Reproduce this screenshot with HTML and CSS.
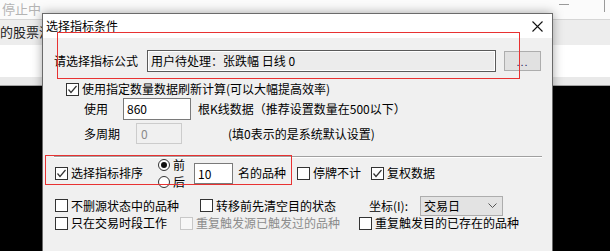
FILE: index.html
```html
<!doctype html>
<html lang="zh-CN">
  <head>
    <meta charset="utf-8">
    <title>选择指标条件</title>
    <link rel="stylesheet" href="styles.css">
  </head>
  <body>
    <div class="app">
      <div class="app-top">
        <span class="status">停止中</span>
        <span class="win-btns"><span class="min-line"></span><span class="max-box"></span></span>
      </div>
      <div class="app-tabs">的股票池</div>
      <div class="app-white"></div>
      <div class="app-gray"></div>
      <div class="app-black"></div>
    </div>

    <div class="dialog">
      <div class="titlebar">
        <span class="title">选择指标条件</span>
        <svg class="close" width="11" height="11" viewBox="0 0 11 11">
          <path d="M0.5 0.5 L10.5 10.5 M10.5 0.5 L0.5 10.5" stroke="#111" stroke-width="1.1" fill="none"/>
        </svg>
      </div>

      <div class="dlg-body">
        <div class="row formula-row">
          <span class="formula-label">请选择指标公式</span>
          <span class="formula-input">用户待处理：张跌幅 日线 0</span>
          <span class="more-btn">...</span>
        </div>

        <div class="row opt-row">
          <span class="cb"><svg width="11" height="11" viewBox="0 0 11 11"><polyline points="1.5,5.5 4,8.5 9.5,2" stroke="#333" stroke-width="1.2" fill="none"/></svg></span>
          <span>使用指定数量数据刷新计算(可以大幅提高效率)</span>
        </div>

        <div class="row num-row">
          <span class="num-label">使用</span>
          <span class="text-input">860</span>
          <span class="num-note">根K线数据（推荐设置数量在500以下）</span>
        </div>

        <div class="row period-row">
          <span class="period-label">多周期</span>
          <span class="text-input disabled">0</span>
          <span class="period-note">(填0表示的是系统默认设置)</span>
        </div>

        <div class="separator"></div>

        <div class="row sort-row">
          <span class="cb first"><svg width="11" height="11" viewBox="0 0 11 11"><polyline points="1.5,5.5 4,8.5 9.5,2" stroke="#333" stroke-width="1.2" fill="none"/></svg></span>
          <span class="cb-text">选择指标排序</span>
          <div class="radio-group">
            <label class="radio-item"><span class="radio checked"></span><span class="radio-text">前</span></label>
            <label class="radio-item"><span class="radio"></span><span class="radio-text">后</span></label>
          </div>
          <span class="text-input rank-input">10</span>
          <span class="rank-note">名的品种</span>
          <span class="cb skip-cb"></span>
          <span class="cb-text">停牌不计</span>
          <span class="cb fq-cb"><svg width="11" height="11" viewBox="0 0 11 11"><polyline points="1.5,5.5 4,8.5 9.5,2" stroke="#333" stroke-width="1.2" fill="none"/></svg></span>
          <span class="cb-text">复权数据</span>
        </div>

        <div class="row opts-row1">
          <span class="item w145"><span class="cb first"></span><span class="cb-text">不删源状态中的品种</span></span>
          <span class="item w169"><span class="cb"></span><span class="cb-text">转移前先清空目的状态</span></span>
          <span class="coord-label">坐标(I):</span>
          <span class="select">交易日
            <svg class="chev" width="9" height="6" viewBox="0 0 9 6"><polyline points="0.5,0.5 4.5,4.5 8.5,0.5" stroke="#555" stroke-width="1" fill="none"/></svg>
          </span>
        </div>

        <div class="row opts-row2">
          <span class="item w125"><span class="cb first"></span><span class="cb-text">只在交易时段工作</span></span>
          <span class="item w179 is-disabled"><span class="cb"></span><span class="cb-text">重复触发源已触发过的品种</span></span>
          <span class="item"><span class="cb"></span><span class="cb-text">重复触发目的已存在的品种</span></span>
        </div>
      </div>

      <div class="mark mark-formula"></div>
      <div class="mark mark-sort"></div>
    </div>
  </body>
</html>
```

FILE: styles.css
```css
*, *::before, *::after {
  box-sizing: border-box;
}

body {
  margin: 0;
  width: 610px;
  height: 251px;
  overflow: hidden;
  position: relative;
  font-family: "Noto Sans CJK SC", "Microsoft YaHei", sans-serif;
  font-size: 12px;
  color: #000;
}

/* application behind the dialog */
.app {
  display: flex;
  flex-direction: column;
  height: 251px;
}

.app-top {
  height: 19px;
  background: #fbfbfb;
  display: flex;
  justify-content: space-between;
  align-items: flex-start;
}

.status {
  color: #b4b4b4;
  font-size: 13px;
  line-height: 17px;
  padding-left: 2px;
}

.win-btns {
  display: flex;
  align-items: flex-start;
  gap: 35px;
}

.min-line {
  width: 10px;
  height: 1px;
  margin-top: 4px;
  background: #9a9a9a;
}

.max-box {
  width: 6px;
  height: 12px;
  border-left: 1px solid #9a9a9a;
}

.app-tabs {
  height: 26px;
  background: #ededed;
  border-top: 1px solid #d6d6d6;
  line-height: 24px;
  font-size: 13px;
  color: #222;
}

.app-white {
  height: 32px;
  background: #fff;
}

.app-gray {
  height: 9px;
  background: #e9e9e9;
  border-bottom: 1px solid #a3a3a3;
}

.app-black {
  flex: 1;
  background: #000;
}

/* dialog window, cut by the bottom of the screen */
.dialog {
  position: absolute;
  left: 42px;
  top: 13px;
  width: 511px;
  height: 238px;
  overflow: hidden;
  border: 1px solid #6a6a6a;
  border-bottom: none;
  background: #f0f0f0;
  box-shadow: 0 0 10px rgba(0, 0, 0, 0.35);
}

.titlebar {
  height: 24px;
  background: #fff;
  display: flex;
  align-items: center;
  justify-content: space-between;
  padding: 0 9px 0 3px;
}

.title {
  line-height: 16px;
}

.dlg-body {
  padding: 12px 0 0 11px;
}

.row {
  display: flex;
  align-items: center;
  line-height: 16px;
  white-space: nowrap;
}

.formula-row {
  height: 22px;
}

.formula-label {
  width: 93px;
}

.formula-input {
  width: 349px;
  height: 22px;
  border: 1px solid #5a5a5a;
  box-shadow: inset 0 0 0 1px #fff;
  background: #ececec;
  padding-left: 3px;
  line-height: 19px;
}

.more-btn {
  width: 37px;
  height: 20px;
  margin-left: 8px;
  background: #e1e1e1;
  border: 1px solid #adadad;
  text-align: center;
  font-family: "Liberation Sans", sans-serif;
  font-size: 11px;
  line-height: 20px;
  color: #1a1a5a;
  letter-spacing: 1px;
}

.opt-row {
  height: 16px;
  margin-top: 9px;
  padding-left: 12px;
  gap: 3px;
}

.num-row {
  height: 22px;
  margin-top: 1px;
  padding-left: 30px;
}

.num-label {
  width: 39px;
}

.text-input {
  width: 68px;
  height: 22px;
  border: 1px solid #7a7a7a;
  background: #fff;
  padding-left: 3px;
  line-height: 20px;
}

.num-note {
  margin-left: 7px;
}

.period-row {
  height: 21px;
  margin-top: 3px;
  padding-left: 30px;
}

.period-label {
  width: 52px;
}

.text-input.disabled {
  width: 46px;
  height: 21px;
  border-color: #cccccc;
  background: #f0f0f0;
  color: #8a8a8a;
  padding-left: 4px;
  line-height: 19px;
}

.period-note {
  margin-left: 46px;
}

.separator {
  width: 488px;
  margin-top: 12px;
  border-top: 1px solid #a0a0a0;
  border-bottom: 1px solid #fff;
}

/* checkboxes and radios */
.cb {
  width: 13px;
  height: 13px;
  flex: none;
  border: 1px solid #333;
  background: #fff;
  display: flex;
  align-items: center;
  justify-content: center;
}

.cb.first {
  margin-left: 1px;
}

.cb-text {
  margin-left: 3px;
}

.sort-row {
  height: 30px;
}

.radio-group {
  display: flex;
  flex-direction: column;
  margin-left: 15px;
  width: 36px;
}

.radio-item {
  display: flex;
  align-items: center;
  gap: 3px;
  height: 17px;
}

.radio-text {
  line-height: 13px;
}

.radio {
  width: 12px;
  height: 12px;
  border: 1px solid #333;
  border-radius: 50%;
  background: #fff;
  display: flex;
  align-items: center;
  justify-content: center;
}

.radio.checked::after {
  content: "";
  width: 6px;
  height: 6px;
  border-radius: 50%;
  background: #111;
}

.rank-input {
  width: 39px;
  height: 21px;
  line-height: 19px;
}

.rank-note {
  margin-left: 5px;
}

.skip-cb {
  margin-left: 11px;
}

.fq-cb {
  margin-left: 10px;
}

.opts-row1 {
  height: 21px;
  margin-top: 7px;
}

.opts-row2 {
  height: 14px;
}

.item {
  display: flex;
  align-items: center;
}

.w145 { width: 146px; }
.w169 { width: 169px; }
.w125 { width: 126px; }
.w179 { width: 179px; }

.is-disabled .cb {
  border-color: #c8c8c8;
  background: #f7f7f7;
}

.is-disabled .cb-text {
  color: #8c8c8c;
}

.coord-label {
  width: 51px;
}

.select {
  width: 83px;
  height: 20px;
  background: #e3e3e3;
  border: 1px solid #adadad;
  padding-left: 3px;
  line-height: 18px;
  display: flex;
  justify-content: space-between;
  align-items: center;
  padding-right: 5px;
}

/* red annotation frames drawn over the dialog */
.mark {
  position: absolute;
  border: 1px solid #e83232;
}

.mark-formula {
  left: 14px;
  top: 18px;
  width: 463px;
  height: 47px;
}

.mark-sort {
  left: 2px;
  top: 141px;
  width: 247px;
  height: 30px;
}
```
